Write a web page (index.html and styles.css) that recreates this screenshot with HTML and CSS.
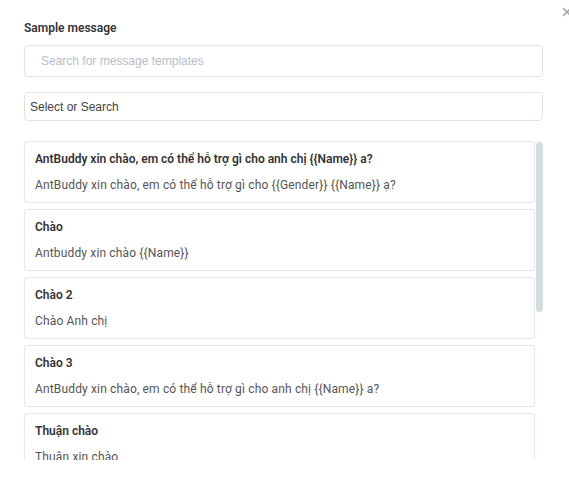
FILE: index.html
```html
<!DOCTYPE html>
<html lang="vi">
<head>
<meta charset="utf-8">
<link rel="stylesheet" href="styles.css">
</head>
<body>
<div class="modal">
  <button class="close" aria-label="Close">
    <svg width="10" height="10" viewBox="0 0 10 10"><path d="M1 1 L9 9 M9 1 L1 9" stroke="#a8a8a8" stroke-width="1.6" fill="none"/></svg>
  </button>
  <h2 class="title">Sample message</h2>
  <div class="field field-search"><input type="text" placeholder="Search for message templates"></div>
  <div class="field field-select"><input type="text" placeholder="Select or Search"></div>
  <div class="list-wrap">
    <div class="list">
      <div class="list-inner">
        <div class="card">
          <div class="card-title">AntBuddy xin chào, em có thể hỗ trợ gì cho anh chị {{Name}} a?</div>
          <div class="card-body">AntBuddy xin chào, em có thể hỗ trợ gì cho {{Gender}} {{Name}} ạ?</div>
        </div>
        <div class="card">
          <div class="card-title">Chào</div>
          <div class="card-body">Antbuddy xin chào {{Name}}</div>
        </div>
        <div class="card">
          <div class="card-title">Chào 2</div>
          <div class="card-body">Chào Anh chị</div>
        </div>
        <div class="card">
          <div class="card-title">Chào 3</div>
          <div class="card-body">AntBuddy xin chào, em có thể hỗ trợ gì cho anh chị {{Name}} a?</div>
        </div>
        <div class="card">
          <div class="card-title">Thuận chào</div>
          <div class="card-body">Thuận xin chào</div>
        </div>
      </div>
    </div>
    <div class="track"><div class="thumb"></div></div>
  </div>
</div>
</body>
</html>
```
FILE: styles.css
```css
* { box-sizing: border-box; }
html, body { margin: 0; padding: 0; background: #fff; }
body { width: 569px; height: 497px; overflow: hidden; font-family: Roboto, "Noto Sans", sans-serif; }
.modal { position: relative; padding: 20px 26px 0 24px; }
.close { position: absolute; top: 5px; left: 561px; width: 12px; height: 12px; padding: 0; border: 0; background: none; }
.title { margin: 0 0 9px; font-size: 12px; line-height: 16px; font-weight: 600; color: #333; }
.field input { display: block; width: 100%; border: 1px solid #dce6e8; border-radius: 4px; background: #fff; font-family: "Liberation Sans", Arial, sans-serif; font-size: 12px; outline: none; }
.field-search input { height: 32px; padding: 0 16px; }
.field-search input::placeholder { color: #b7bccb; }
.field-select { margin-top: 15px; }
.field-select input { height: 29px; padding: 0 5px; }
.field-select input::placeholder { color: #444; }
.list-wrap { margin-top: 20px; display: flex; gap: 1px; height: 319px; }
.list { flex: 1; overflow: hidden; }
.list-inner { display: flex; flex-direction: column; gap: 6px; }
.card { border: 1px solid #e3e8ea; border-radius: 2px; padding: 9px 10px 9px; }
.card-title { font-size: 12px; line-height: 16px; font-weight: 600; color: #333; }
.card-body { margin-top: 10px; font-size: 12px; line-height: 16px; color: #555; white-space: nowrap; letter-spacing: 0.15px; }
.track { width: 7px; padding-top: 1px; }
.thumb { height: 170px; background: #d6dde0; border-radius: 4px; }
```
